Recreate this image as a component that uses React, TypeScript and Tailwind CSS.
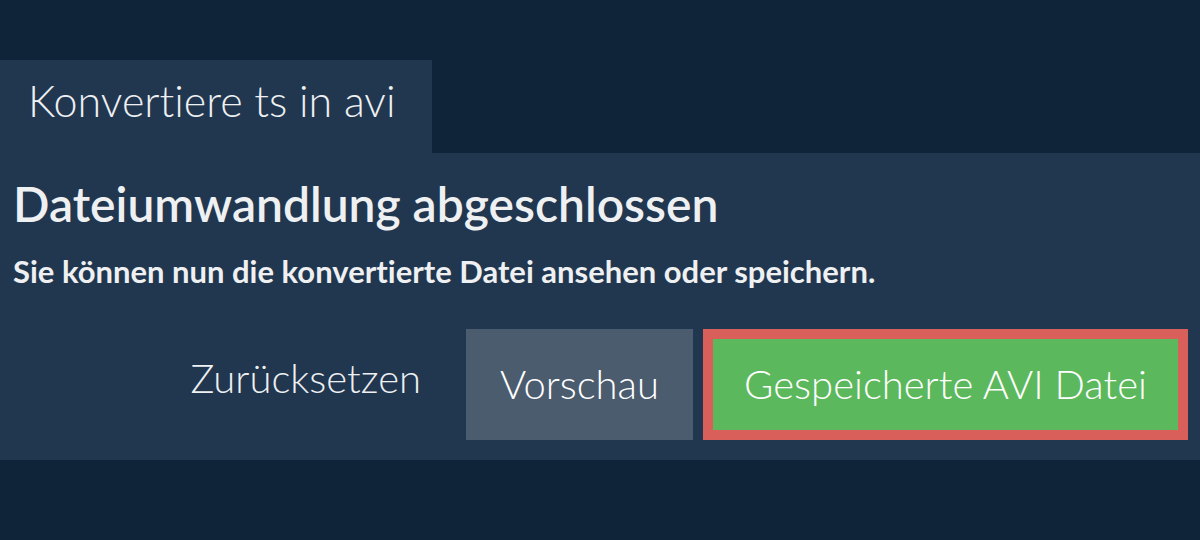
export default function App() {
  return (
    <div className="h-[540px] w-[1200px] bg-[#0f2339] pt-[60px] font-['Lato',sans-serif] [font-variant-ligatures:none]">
      <div className="h-[93px] w-[432px] bg-[#213750] pl-[28px] pt-[15px] text-[43px] font-light leading-[1.2] text-[#eef0f2]">
        Konvertiere ts in avi
      </div>
      <div className="flex h-[307px] flex-col bg-[#213750] pl-[13px] pr-[12px]">
        <h1 className="mt-[22px] text-[48px] font-semibold leading-[1.2] text-[#eef0f2]">
          Dateiumwandlung abgeschlossen
        </h1>
        <p className="mt-[20px] text-[31px] font-bold leading-[1.2] text-[#eef0f2]">
          Sie können nun die konvertierte Datei ansehen oder speichern.
        </p>
        <div className="mt-[39px] flex items-center justify-end">
          <button className="mr-[45px] h-[111px] pb-[12px] text-[40px] font-light leading-[1.2] text-[#eef0f2]">
            Zurücksetzen
          </button>
          <button className="h-[111px] w-[227px] bg-[#4b5c6e] text-[40px] font-light leading-[1.2] text-white">
            Vorschau
          </button>
          <button className="ml-[10px] h-[111px] w-[485px] border-[10px] border-[#d9605a] bg-[#5cb85c] text-[40px] font-light leading-[1.2] text-white">
            Gespeicherte AVI Datei
          </button>
        </div>
      </div>
    </div>
  )
}
